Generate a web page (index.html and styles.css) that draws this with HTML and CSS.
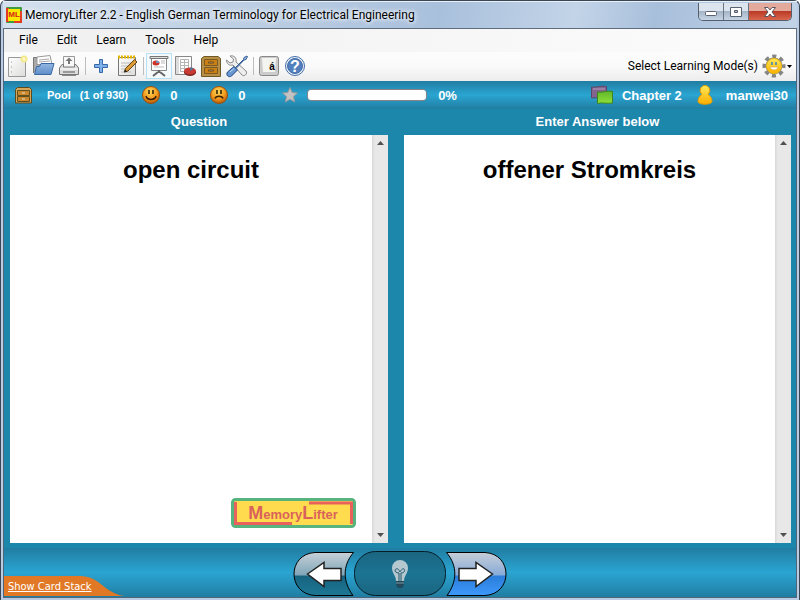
FILE: index.html
```html
<!DOCTYPE html>
<html lang="en">
<head>
<meta charset="utf-8">
<title>MemoryLifter 2.2</title>
<link rel="stylesheet" href="styles.css">
</head>
<body>
<svg class="defs" aria-hidden="true">
  <defs>
    <radialGradient id="orange" cx=".45" cy=".3" r=".7"><stop offset="0" stop-color="#ffd85a"/><stop offset=".6" stop-color="#f39a1c"/><stop offset="1" stop-color="#b85708"/></radialGradient>
    <linearGradient id="paper" x1="0" y1="0" x2="1" y2="1"><stop offset="0" stop-color="#fff"/><stop offset="1" stop-color="#dcdcda"/></linearGradient>
    <linearGradient id="folder" x1="0" y1="0" x2="0" y2="1"><stop offset="0" stop-color="#93b7e2"/><stop offset="1" stop-color="#5e8dc8"/></linearGradient>
    <linearGradient id="gold" x1="0" y1="0" x2="0" y2="1"><stop offset="0" stop-color="#ffe95a"/><stop offset="1" stop-color="#fcae00"/></linearGradient>
    <linearGradient id="green" x1="0" y1="0" x2="0" y2="1"><stop offset="0" stop-color="#5fb62a"/><stop offset="1" stop-color="#8fe03a"/></linearGradient>
    <linearGradient id="glass" x1="0" y1="0" x2="0" y2="1"><stop offset="0" stop-color="#c6d0d8"/><stop offset=".53" stop-color="#7fa5b7"/><stop offset=".54" stop-color="#17637f"/><stop offset="1" stop-color="#1c7795"/></linearGradient>
    <linearGradient id="glassblue" x1="0" y1="0" x2="0" y2="1"><stop offset="0" stop-color="#c6ced8"/><stop offset=".53" stop-color="#87aad8"/><stop offset=".54" stop-color="#2b7dd8"/><stop offset="1" stop-color="#3d98fb"/></linearGradient>
    <linearGradient id="dark" x1="0" y1="0" x2="0" y2="1"><stop offset="0" stop-color="#1b6580"/><stop offset=".5" stop-color="#1b7493"/><stop offset="1" stop-color="#1b6580"/></linearGradient>
  </defs>
</svg>
<div class="window">
  <header class="titlebar">
    <svg class="app-icon" viewBox="0 0 16 16"><rect width="16" height="16" rx="1" fill="#3f9b3e"/><path d="M0 1h3v14H0z" fill="#e23a22"/><path d="M8 15h7V4" fill="none" stroke="#e23a22" stroke-width="2"/><rect x="2" y="2" width="12" height="12" fill="#ffe800"/><text x="8" y="10" class="app-letters">ML</text></svg>
    <h1 class="title">MemoryLifter 2.2 - English German Terminology for Electrical Engineering</h1>
    <div class="caption">
      <button class="cap" aria-label="Minimize"><svg width="14" height="12" viewBox="0 0 14 12"><rect x="1.500" y="5.500" width="11" height="4" rx="1" fill="#fff" stroke="#5a6270"/></svg></button>
      <button class="cap" aria-label="Maximize"><svg width="14" height="12" viewBox="0 0 14 12"><path d="M1.500 1.500h11v9h-11zM5.500 4.500h3v2h-3z" fill="#fff" fill-rule="evenodd" stroke="#5a6270"/></svg></button>
      <button class="cap close" aria-label="Close"><svg width="14" height="12" viewBox="0 0 14 12"><path d="M1.500 1.500h3.500l2 2.500 2-2.500h3.500L9 6l3.500 4.500H9L7 8l-2 2.500H1.500L5 6z" fill="#fff" stroke="#5a5560"/></svg></button>
    </div>
  </header>
  <nav class="menu">
    <button>File</button><button>Edit</button><button>Learn</button><button>Tools</button><button>Help</button>
  </nav>
  <div class="toolbar">
    <button class="tool" aria-label="New"><svg viewBox="0 0 24 24"><path d="M3.500 3.500h17v19h-17z" fill="url(#paper)" stroke="#999"/><path d="M6 8h1M6 13h1M6 18h1" stroke="#999"/><circle cx="19" cy="5" r="2.500" fill="#fffbd0" stroke="#f3e88c" stroke-width="2"/></svg></button>
    <button class="tool" aria-label="Open"><svg viewBox="0 0 24 24"><path d="M2.500 19V3.500h7l1 2h8V10" fill="#aaa" stroke="#777"/><path d="m6 3 13-1.500 2 9H6z" fill="#fff" stroke="#999"/><path d="m8 6 10-1M8 8l11-1" stroke="#aaa"/><path d="M10 9.500h13l-3 11H3.500l2-8h3z" fill="url(#folder)" stroke="#3a68a5"/></svg></button>
    <button class="tool" aria-label="Print"><svg viewBox="0 0 24 24"><path d="M6.500 14V2.500h11V14" fill="#f8f8f8" stroke="#999"/><path d="M11 10V7H8.500L12 3.500 15.500 7H13v3z" fill="#777"/><path d="M5 10.500 2.500 14v6.500h19V14L19 10.500h-1.500V13h-11v-2.500z" fill="#ddd" stroke="#777"/><path d="M3 15h18" stroke="#fff"/><rect x="6" y="17" width="12" height="2" fill="#999"/><path d="M5 21.500h14" stroke="#888"/></svg></button>
    <span class="sep"></span>
    <button class="tool" aria-label="Add"><svg viewBox="0 0 24 24"><path d="M10.500 5.500h3v5h5v3h-5v5h-3v-5h-5v-3h5z" fill="#7fb2ea" stroke="#3667a8"/></svg></button>
    <button class="tool" aria-label="Edit"><svg viewBox="0 0 24 24"><path d="M3.500 3.500h17v18h-17z" fill="url(#paper)" stroke="#777"/><path d="M6 9h10M6 12h8M6 15h6M6 18h10" stroke="#bbb"/><path d="M3 3h18" stroke="#e5b400" stroke-width="3" stroke-dasharray="2 1"/><path d="m9.500 18 1-3.500 9-9 2.500 2.500-9 9z" fill="#d99a37" stroke="#684111"/><path d="m9 18.500 1-3 2 2z" fill="#222"/></svg></button>
    <span class="sep"></span>
    <button class="tool active" aria-label="Slide show"><svg viewBox="0 0 24 24"><path d="M4.500 4.500h15v12h-15z" fill="#fff" stroke="#888"/><path d="M3 2.500h18v2H3z" fill="#ddd" stroke="#777"/><ellipse cx="9" cy="9" rx="3.500" ry="2.500" fill="#cf3325"/><path d="M9 9V6.500A3.500 2.500 0 0 1 12.500 9z" fill="#7b93bd"/><path d="M14 7h4M14 9h4M7 13h10" stroke="#bbb"/><path d="m11 18-5 4M13 18l5 4M12 16v3" stroke="#666" stroke-width="2"/></svg></button>
    <button class="tool" aria-label="Statistics"><svg viewBox="0 0 24 24"><path d="M2.500 2.500h16v18h-16z" fill="#fff" stroke="#888"/><path d="M3 3h3v17H3z" fill="#ddd"/><path d="M7.500 5.500h8v12h-8zM8 8.500h8M8 11.500h8M8 14.500h8M11.500 5v12" fill="none" stroke="#b5b5b5"/><path d="M11 17v2c2 4 10 4 12 0v-2z" fill="#78201b"/><ellipse cx="17" cy="17" rx="6" ry="3.500" fill="#c83b32"/><path d="M17 17v-3.500a6 3.500 0 0 1 4 1z" fill="#55739f"/></svg></button>
    <button class="tool" aria-label="Card box"><svg viewBox="0 0 24 24"><path d="M5 2.500h14l2.500 2v18h-19v-18z" fill="#b88f45" stroke="#6d5a26"/><path d="M5.500 5.500h13v6h-13zM5.500 13.500h13v6h-13z" fill="#cc7f14" stroke="#7a5c22"/><path d="M9.500 8h5v1h-5zM9.500 16h5v1h-5z" fill="#eee" stroke="#684b1a"/></svg></button>
    <button class="tool" aria-label="Settings"><svg viewBox="0 0 24 24"><path d="M5 2 8.500 5 8 8 5 9 1.500 6c0 4 3 6 6.500 5l9 10c2 2 6-1 4-4L11 8c1-4-2-7-6-6z" fill="#eee" stroke="#888"/><path d="m10.500 13.500 8-8 .5-2 3-1.500.5.500-1.500 3-2 .5-7.500 8z" fill="#9ebce0" stroke="#345e98"/><path d="m9 12.500 3.500 3.500-6 6c-3 2-6-1-4-4z" fill="#6796d1" stroke="#214a87"/><path d="m5 18 4-3.500" stroke="#c0d8f5"/></svg></button>
    <span class="sep"></span>
    <button class="tool" aria-label="Characters"><svg viewBox="0 0 24 24"><rect x="2.500" y="2.500" width="19" height="19" rx="2" fill="#ccc" stroke="#888"/><path d="M5 4h14l-1 14H6z" fill="#f4f4f1"/><text x="15" y="16" class="key">á</text></svg></button>
    <button class="tool" aria-label="Help"><svg viewBox="0 0 24 24"><circle cx="12" cy="12" r="9.500" fill="#eef4fc" stroke="#426ca8"/><circle cx="12" cy="12" r="7.500" fill="#527fbd" stroke="#426ca8"/><text x="12" y="17.500" class="question">?</text></svg></button>
    <button class="mode">Select Learning Mode(s)
      <svg class="gear" viewBox="0 0 24 24"><circle cx="12" cy="12" r="9.500" fill="none" stroke="#858585" stroke-width="4" stroke-dasharray="4 3.460" stroke-dashoffset="2"/><circle cx="12" cy="12" r="8.500" fill="#8c8878"/><circle cx="12" cy="12" r="7.500" fill="url(#gold)" stroke="#f0bc10"/><path d="M10 8v3M14 8v3" stroke="#3182b8" stroke-width="1.500"/><path d="M8 13h8c-1 4-7 4-8 0z" fill="#fff" stroke="#d8ae40" stroke-width=".7"/></svg>
      <svg class="caret" viewBox="0 0 5 3"><path d="M0 0h5L2.500 3z"/></svg>
    </button>
  </div>
  <section class="status">
    <svg class="box-icon" viewBox="0 0 17 17"><path d="M2.500.5h12l2 2v13.500H.5V2.500z" fill="#d5a65c" stroke="#5d4a1c"/><path d="M2.500 3.500h12v5h-12zM2.500 9.500h12v5h-12z" fill="#c9882f" stroke="#5f501e"/><path d="M7 6h3M7 12h3" stroke="#eadbb5"/></svg>
    <span class="pool">Pool</span><span class="pool count">(1 of 930)</span>
    <svg class="face" viewBox="0 0 18 18"><circle cx="9" cy="9" r="8.500" fill="url(#orange)" stroke="#99510d"/><path d="M7 4v4M11 4v4" stroke="#241b05" stroke-width="1.500"/><path d="M4 10c1 4.500 9 4.500 10 0" fill="none" stroke="#3b2105" stroke-width="1.500"/></svg>
    <span class="score">0</span>
    <svg class="face" viewBox="0 0 18 18"><circle cx="9" cy="9" r="8.500" fill="url(#orange)" stroke="#99510d"/><path d="M7 4v4M11 4v4" stroke="#241b05" stroke-width="1.500"/><path d="M5 12.500c1-3 7-3 8 0" fill="none" stroke="#3b2105" stroke-width="1.500"/></svg>
    <span class="score">0</span>
    <svg class="star" viewBox="0 0 16 16"><path d="m8 .5 2.200 5 5.300.5-4 3.600 1.200 5.400L8 12.200 3.300 15l1.200-5.400L.5 6l5.300-.5z" fill="#c3c3c3" stroke="#92989b"/></svg>
    <progress class="progress" value="0" max="100" aria-label="Progress"></progress>
    <span>0%</span>
    <svg class="chapter" viewBox="0 0 22 20"><path d="M.5 2c5 1 9-2 15-.5V13c-6 1-10-1-15 0z" fill="#81658f" stroke="#5c4769"/><path d="M2 4h12" stroke="#b49abc"/><path d="M6.500 7c5 1 9-2 15-.5V18c-6 1-10-1-15 .5z" fill="url(#green)" stroke="#3e841b"/></svg>
    <span>Chapter 2</span>
    <svg class="user" viewBox="0 0 16 20"><path d="M5 9.500C1.500 6 3.500.5 8 .5s6.500 5.500 3 9c3 1.500 4 4.500 4 7.500-2 3-12 3-14 0 0-3 1-6 4-7.500z" fill="url(#gold)" stroke="#e29b00"/></svg>
    <span>manwei30</span>
  </section>
  <main class="cards">
    <section class="card">
      <h2>Question</h2>
      <div class="pane">
        <div class="page">
          <p class="word">open circuit</p>
          <svg class="brand" viewBox="0 0 125 30"><rect x="1.500" y="1.500" width="122" height="27" rx="3" fill="#ffdb4d" stroke="#57b47f" stroke-width="3"/><path d="M4.500 4v21.500H61M78 5h42.500v21" fill="none" stroke="#e8625b" stroke-width="3"/><text x="62" y="21" class="brand-text"><tspan class="big">M</tspan>emory<tspan class="big">L</tspan>ifter</text></svg>
        </div>
        <div class="scroll"><button aria-label="Scroll up"><svg viewBox="0 0 7 4"><path d="M0 4h7L3.500 0z"/></svg></button><button aria-label="Scroll down"><svg viewBox="0 0 7 4"><path d="M0 0h7L3.500 4z"/></svg></button></div>
      </div>
    </section>
    <section class="card">
      <h2>Enter Answer below</h2>
      <div class="pane">
        <div class="page"><p class="word">offener Stromkreis</p></div>
        <div class="scroll"><button aria-label="Scroll up"><svg viewBox="0 0 7 4"><path d="M0 4h7L3.500 0z"/></svg></button><button aria-label="Scroll down"><svg viewBox="0 0 7 4"><path d="M0 0h7L3.500 4z"/></svg></button></div>
      </div>
    </section>
  </main>
  <footer class="footer">
    <div class="stack"><svg class="tab" viewBox="0 0 120 20" preserveAspectRatio="none"><path d="M0 0h76C98 1 98 16 120 20H0z" fill="#e07826"/></svg><a href="#stack">Show Card Stack</a></div>
    <div class="controls">
      <button aria-label="Previous"><svg width="61" height="46" viewBox="0 0 61 46"><path d="M60.500 1.500C49 15 50 31 60 44.500H22C-6 43-6 3 22 1.500z" fill="url(#glass)" stroke="#000"/><path d="M14.500 23 31 11.500v6h17v12H31v6z" fill="#fff" stroke="#222" stroke-width="1.500"/></svg></button>
      <button aria-label="Hint"><svg width="92" height="46" viewBox="0 0 92 46"><rect x=".5" y=".5" width="91" height="44" rx="21" fill="url(#dark)" stroke="#061c26"/><path d="M42 30c0-5-4-8-4-13a8 8 0 0 1 16 0c0 5-4 8-4 13z" fill="#b5c8d0"/><path d="M45 30v-8c-4 0-5-3-3-4s3 1 4 3c1-2 3-4 4-3s1 4-3 4v8" fill="none" stroke="#23566a"/><path d="M42 30h8v4l-2 3h-4l-2-3z" fill="#24495a"/><path d="M42 32h8" stroke="#7997a3"/></svg></button>
      <button aria-label="Next"><svg width="61" height="46" viewBox="0 0 61 46"><path d="M.5 1.500C12 15 11 31 1 44.500h38c28-1.500 28-41.500 0-43z" fill="url(#glassblue)" stroke="#000"/><path d="M46.500 23 30 11.500v6H13v12h17v6z" fill="#fff" stroke="#222" stroke-width="1.500"/></svg></button>
    </div>
  </footer>
</div>
</body>
</html>
```
FILE: styles.css
```css
* { box-sizing: border-box; }
body { margin: 0; font-family: "Liberation Sans", Arial, sans-serif; }
button { padding: 0; border: 0; background: none; font: inherit; color: inherit; }
svg { display: block; flex: none; }
.defs { position: absolute; width: 0; height: 0; }

.window {
  display: flex;
  flex-direction: column;
  min-height: 100vh;
  border: 1px solid #3b4654;
  border-bottom: 0;
  border-radius: 6px 6px 0 0;
  padding: 0 2px 2px;
  background: #b9cce3;
}

.titlebar {
  display: flex;
  align-items: center;
  height: 27px;
  padding: 2px 5px 2px 3px;
  border-top: 1px solid #e8f0f8;
  background: linear-gradient(100deg, #d4e0ee 0, #b9cce2 35%, #a9c0dc 55%, #c3d4e8 72%, #a8bfdb 82%, #c2d3e7);
}
.app-icon { width: 16px; height: 16px; }
.app-letters { font: bold 8px "Liberation Sans", sans-serif; text-anchor: middle; fill: #d02618; }
.title {
  flex: 1;
  margin: 0 0 0 3px;
  font: 12px/20px Roboto, "Noto Sans", sans-serif;
  text-shadow: 0 0 5px #fff, 0 0 5px #fff;
  white-space: nowrap;
}
.caption {
  display: flex;
  align-self: flex-start;
  height: 18px;
  margin-top: -1px;
  border: 1px solid #555f6e;
  border-top: 0;
  border-radius: 0 0 5px 5px;
  overflow: hidden;
}
.cap {
  display: grid;
  place-items: center;
  width: 25px;
  border-right: 1px solid #6a7482;
  background: linear-gradient(#dce5ee 45%, #a5b5c8 50%, #c5d5e5);
}
.cap.close {
  width: 42px;
  border-right: 0;
  background: linear-gradient(#e3a99b 45%, #bb3a25 50%, #d8674d);
}

.menu {
  display: flex;
  gap: 1px;
  height: 24px;
  padding-left: 6px;
  border: 1px solid #5f6c7b;
  border-bottom: 0;
  background: linear-gradient(90deg, #f0f0f0, #fcfcfc);
  font: 12px/22px Roboto, "Noto Sans", sans-serif;
}
.menu button { display: flex; padding: 0 9px; }

.toolbar {
  display: flex;
  align-items: center;
  height: 29px;
  padding-bottom: 1px;
  border: solid #5f6c7b;
  border-width: 0 1px;
  background: linear-gradient(#fcfcfc, #fafafa 50%, #ececec);
}
.tool { display: grid; place-items: center; width: 26px; height: 26px; }
.tool svg { width: 24px; height: 24px; }
.tool.active { border: 1px solid #b8e0f5; background: #f4f9fc; }
.sep { width: 6px; height: 18px; background: linear-gradient(#bdbdbd, #bdbdbd) center / 1px 100% no-repeat; }
.key { font: bold 10px "Liberation Sans", sans-serif; text-anchor: middle; }
.question { font: bold 16px "Liberation Sans", sans-serif; text-anchor: middle; fill: #fff; }
.mode {
  display: flex;
  align-items: center;
  margin: 0 4px 0 auto;
  font: 12px/20px Roboto, "Noto Sans", sans-serif;
}
.gear { width: 24px; height: 24px; margin: 0 1px 0 4px; }
.caret { width: 5px; height: 3px; }

.status {
  display: flex;
  align-items: center;
  height: 28px;
  padding: 0 8px 0 11px;
  border: solid #50677a;
  border-width: 0 1px;
  background: linear-gradient(#217da2, #2aa5d2 50%, #217da2);
  color: #fff;
  font-size: 13px;
  font-weight: bold;
}
.box-icon { width: 17px; height: 17px; margin-right: 15px; }
.pool { font-size: 11px; }
.count { margin: 0 14px 0 9px; }
.face { width: 18px; height: 18px; margin-right: 10px; }
.score { width: 40px; }
.star { width: 16px; height: 16px; margin: 0 9px 0 4px; }
.progress {
  appearance: none;
  width: 120px;
  height: 12px;
  margin-right: 11px;
  border: 1px solid #8b8284;
  border-radius: 4px;
  background: #fff;
  overflow: hidden;
}
.progress::-webkit-progress-bar { background: #fff; }
.chapter { width: 22px; height: 20px; margin: 0 9px 0 auto; }
.user { width: 16px; height: 20px; margin: 0 13px 0 15px; }

.cards {
  flex: 1;
  display: grid;
  grid-template-columns: 378fr 387fr;
  gap: 16px;
  padding: 0 5px 5px 6px;
  border: solid #50677a;
  border-width: 0 1px;
  background: #1d86ab;
}
.card { display: flex; flex-direction: column; }
.card h2 { margin: 0; color: #fff; font-size: 13px; line-height: 26px; text-align: center; }
.pane { flex: 1; display: flex; background: #fff; }
.page { flex: 1; display: flex; flex-direction: column; justify-content: space-between; padding: 20px 16px 15px 16px; }
.word { margin: 0; font-size: 24px; font-weight: bold; line-height: 30px; text-align: center; }
.brand { width: 125px; height: 30px; align-self: flex-end; }
.brand-text { font: bold 13px "Liberation Sans", sans-serif; text-anchor: middle; fill: #d9635c; }
.big { font-size: 18px; }
.scroll {
  display: flex;
  flex-direction: column;
  justify-content: space-between;
  width: 16px;
  background: linear-gradient(90deg, #d8d8d8, #e8e8e8 3px);
}
.scroll button { display: grid; place-items: center; height: 16px; }
.scroll svg { width: 7px; height: 4px; fill: #505050; }

.footer {
  display: grid;
  grid-template-columns: 1fr auto 1fr;
  height: 50px;
  border: 1px solid #50677a;
  border-top: 0;
  background: linear-gradient(#217da2, #2aa5d2 50%, #217da2);
}
.stack { display: grid; align-self: end; width: 120px; }
.stack > * { grid-area: 1 / 1; }
.tab { width: 120px; height: 20px; }
.stack a { padding: 1px 0 0 4px; color: #fff; font: 11px/20px "DejaVu Sans Condensed", "DejaVu Sans", sans-serif; }
.controls { display: flex; align-items: flex-end; }
```
